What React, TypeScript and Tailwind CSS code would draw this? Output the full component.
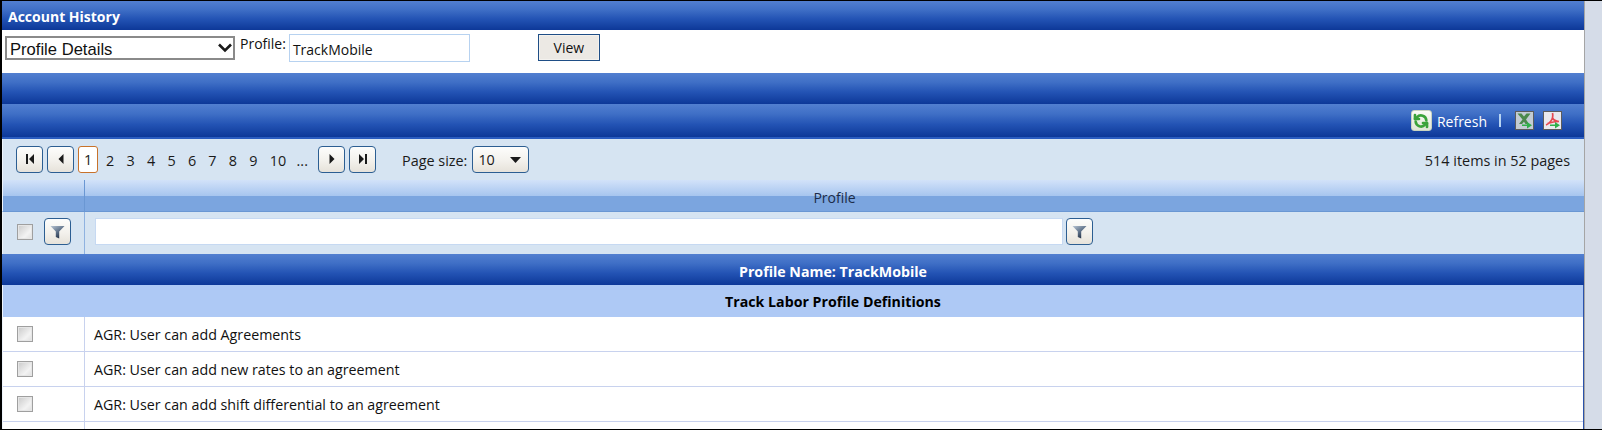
import React from "react";

const BAR = "bg-[linear-gradient(180deg,#527fd0_0%,#3f6fc6_30%,#2353b4_62%,#0d3898_100%)]";
const FACE = "rounded-[4px] border border-[#2c5e92] bg-[linear-gradient(180deg,#fdfdfc_0%,#f3f1ec_55%,#e6e2da_100%)]";
const BTN = `flex items-center justify-center ${FACE}`;

function Nav({ kind, className }: { kind: "first" | "prev" | "next" | "last"; className: string }) {
  return (
    <button className={`${BTN} h-[27px] w-[27px] ${className}`}>
      <svg width="12" height="12" viewBox="0 0 12 12" fill="#1a1a1a">
        {kind === "first" && <path d="M2 1h2v10H2zM10 1v10L5 6z" />}
        {kind === "prev" && <path d="M8.5 1v10L3.5 6z" />}
        {kind === "next" && <path d="M3.5 1v10L8.5 6z" />}
        {kind === "last" && <path d="M8 1h2v10H8zM2 1v10L7 6z" />}
      </svg>
    </button>
  );
}

function Funnel({ id }: { id: string }) {
  return (
    <svg width="15" height="14" viewBox="0 0 15 14">
      <defs>
        <linearGradient id={id} x1="0" y1="0" x2="0.7" y2="1">
          <stop offset="0" stopColor="#b9c6d4" />
          <stop offset="0.55" stopColor="#5d7088" />
          <stop offset="1" stopColor="#1d2b40" />
        </linearGradient>
      </defs>
      <path d="M0.5 1h14L9.2 6.6V13.5L5.8 12V6.6z" fill={`url(#${id})`} />
    </svg>
  );
}

function FilterBtn({ className, id }: { className: string; id: string }) {
  return (
    <button className={`${BTN} h-[27px] w-[27px] ${className}`}>
      <Funnel id={id} />
    </button>
  );
}

function Check({ className }: { className: string }) {
  return (
    <span className={`block h-[16px] w-[16px] border border-[#9f9f9f] bg-[linear-gradient(135deg,#c9c9c9_0%,#f3f3f3_65%,#dedede_100%)] shadow-[inset_0_0_0_1px_#e6e6e6] ${className}`} />
  );
}

function Row({ text, last }: { text: string; last?: boolean }) {
  return (
    <div className={`flex ${last ? "flex-1" : "h-[35px] border-b border-[#c8d2ee]"} bg-white`}>
      <div className="flex w-[82px] items-center border-r border-[#c8d2ee] pl-[14px]">
        {!last && <Check className="" />}
      </div>
      <div className="flex items-center pl-[9px] pt-[2px] text-[14.25px] text-[#111]">{text}</div>
    </div>
  );
}

export default function App() {
  return (
    <div
      className="flex h-[430px] w-[1602px] overflow-hidden border-b border-t border-black bg-white"
      style={{ fontFamily: '"Open Sans", "Noto Sans", sans-serif' }}
    >
      <div className="flex min-w-0 flex-1 flex-col border-l-2 border-black">
        <div className={`${BAR} flex h-[29px] shrink-0 items-center pl-[6px] pt-[2px] text-[14px] font-bold text-white`}>
          Account History
        </div>
        <div className="flex h-[43px] shrink-0 items-start bg-white">
          <div className="relative ml-[3px] mt-[6px] h-[24px] w-[230px]">
            <select
              defaultValue="Profile Details"
              className="h-full w-full appearance-none border-2 border-[#8a8a8a] bg-white pb-[2px] pl-[3px] text-[16.6px] text-[#111]"
              style={{ fontFamily: '"Liberation Sans", Arial, sans-serif' }}
            >
              <option>Profile Details</option>
            </select>
            <svg className="pointer-events-none absolute right-[3px] top-[7px]" width="14" height="10" viewBox="0 0 14 10" fill="none" stroke="#1a1a1a" strokeWidth="2.6">
              <path d="M1 1.5l6 6 6-6" />
            </svg>
          </div>
          <span className="ml-[5px] mt-[4px] text-[14px] leading-[20px] text-[#111]">Profile:</span>
          <div className="ml-[3px] mt-[4px] flex h-[28px] w-[181px] items-center border border-[#b7d2f0] bg-white pl-[3px] pt-[2px] text-[14px] text-[#111]">
            TrackMobile
          </div>
          <button className="ml-[68px] mt-[4px] h-[27px] w-[62px] border border-[#1f4e86] bg-[#ece9e4] text-[14px] text-[#111] shadow-[inset_0_0_0_1px_#f4f2ee]">
            View
          </button>
        </div>
        <div className={`${BAR} h-[31px] shrink-0`} />
        <div className={`${BAR} flex h-[35px] shrink-0 items-center justify-end border-b-2 border-b-[#2a5cc0] pr-[22px] text-white`}>
          <span className="flex h-[21px] w-[21px] items-center justify-center rounded-[3px] border border-[#c9d3c0] bg-[linear-gradient(180deg,#fbfbf6,#dfe6d6)]">
            <svg width="16" height="16" viewBox="0 0 24 24" fill="none" stroke="#3ba33b" strokeWidth="4" strokeLinecap="round" strokeLinejoin="round">
              <path d="M20 11a8 8 0 0 0-14-4.5L3 9" />
              <path d="M3 3v6h6" />
              <path d="M4 13a8 8 0 0 0 14 4.5L21 15" />
              <path d="M21 21v-6h-6" />
            </svg>
          </span>
          <span className="ml-[5px] pt-[2px] text-[14px]">Refresh</span>
          <span className="ml-[12px] h-[13px] w-[2px] bg-[#b6d4f2]" />
          <span className="ml-[14px] flex h-[19px] w-[19px] items-center justify-center border border-[#5c5c5c] bg-[#c3ccd3]">
            <svg width="17" height="17" viewBox="0 0 17 17">
              <path d="M1.5 1.5h4l2.5 3 2.5-3h4L10 7.5l3 4.5H9.5L8 9.8 6 12H3l3.5-4.5z" fill="#4c8a4c" />
              <path d="M6 12.5h5V10l5 3.3-5 3.3v-2.5H6z" fill="#2fb04a" />
            </svg>
          </span>
          <span className="ml-[9px] flex h-[19px] w-[19px] items-center justify-center border border-[#5c5c5c] bg-[#e9e9ee]">
            <svg width="17" height="17" viewBox="0 0 17 17" fill="none">
              <path d="M8.5 1c.8 3 0 6-2 8.5S3.5 12.5 2 13M8.5 6c1 2 3 3.2 6.5 3.5M3.5 11.5c3-1 7-2 11.5-2" stroke="#e5484f" strokeWidth="1.7" />
              <path d="M6 12.5h5V10l5 3.3-5 3.3v-2.5H6z" fill="#2fb04a" />
            </svg>
          </span>
        </div>

        <div className="flex h-[41px] shrink-0 items-center border-l border-[#eef4fb] bg-[#d6e4f2] pb-[1px] text-[14.4px] text-[#1a1a1a]">
          <Nav kind="first" className="ml-[13px]" />
          <Nav kind="prev" className="ml-[4px]" />
          <span className="ml-[4px] flex h-[27px] w-[20px] items-center justify-center rounded-[3px] border border-[#c8722a] bg-white pt-[2px]">1</span>
          <div className="ml-[8px] flex w-[202px] items-center pt-[3px]">
            {["2", "3", "4", "5", "6", "7", "8", "9"].map((n) => (
              <span key={n} className="w-[20.6px]">{n}</span>
            ))}
            <span className="w-[27px]">10</span>
            <span>...</span>
          </div>
          <Nav kind="next" className="ml-[10px]" />
          <Nav kind="last" className="ml-[4px]" />
          <span className="ml-[26px] pt-[3px]">Page size:</span>
          <span className={`${FACE} ml-[5px] flex h-[27px] w-[57px] items-center justify-between pl-[5px] pr-[7px] pt-[1px]`}>
            10
            <svg width="11" height="6" viewBox="0 0 11 6" fill="#1a1a1a"><path d="M0 0h11L5.5 6z" /></svg>
          </span>
          <span className="ml-auto pr-[14px] pt-[3px]">514 items in 52 pages</span>
        </div>

        <div className="flex h-[32px] shrink-0 border-b border-l border-[#eef4fb] border-b-[#6a97d3] bg-[linear-gradient(180deg,#d2e2f9_0%,#a8c6ef_50%,#7ba5df_52%,#7ba5df_100%)] text-[14px] text-[#1c2c48]">
          <div className="w-[82px] border-r border-[#6a97d3]" />
          <div className="flex flex-1 items-center justify-center pt-[3px]">Profile</div>
        </div>

        <div className="flex h-[42px] shrink-0 border-l border-[#eef4fb] bg-[#d6e4f2]">
          <div className="flex w-[82px] items-center border-r border-[#8fb2e0] pb-[3px]">
            <Check className="ml-[14px]" />
            <FilterBtn id="fa" className="ml-[11px]" />
          </div>
          <div className="flex flex-1 items-center pb-[3px]">
            <div className="ml-[10px] h-[27px] w-[968px] border border-[#c6d9f2] bg-white" />
            <FilterBtn id="fb" className="ml-[3px]" />
          </div>
        </div>

        <div className={`${BAR} flex h-[31px] shrink-0 items-center justify-center pl-[80px] pt-[4px] text-[14.2px] font-bold text-white`}>
          Profile Name: TrackMobile
        </div>
        <div className="flex min-h-0 flex-1 flex-col border-l border-r border-[#eef4fb] border-r-[#2a52ab]">
          <div className="flex h-[32px] shrink-0 items-center justify-center bg-[#aec9f5] pl-[80px] pt-[2px] text-[14.2px] font-bold text-black">
            Track Labor Profile Definitions
          </div>
          <Row text="AGR: User can add Agreements" />
          <Row text="AGR: User can add new rates to an agreement" />
          <Row text="AGR: User can add shift differential to an agreement" />
          <Row text="" last />
        </div>
      </div>
      <div className="w-[18px] shrink-0 border-l border-[#a5a5a5] bg-[#d5dce8]" />
    </div>
  );
}
